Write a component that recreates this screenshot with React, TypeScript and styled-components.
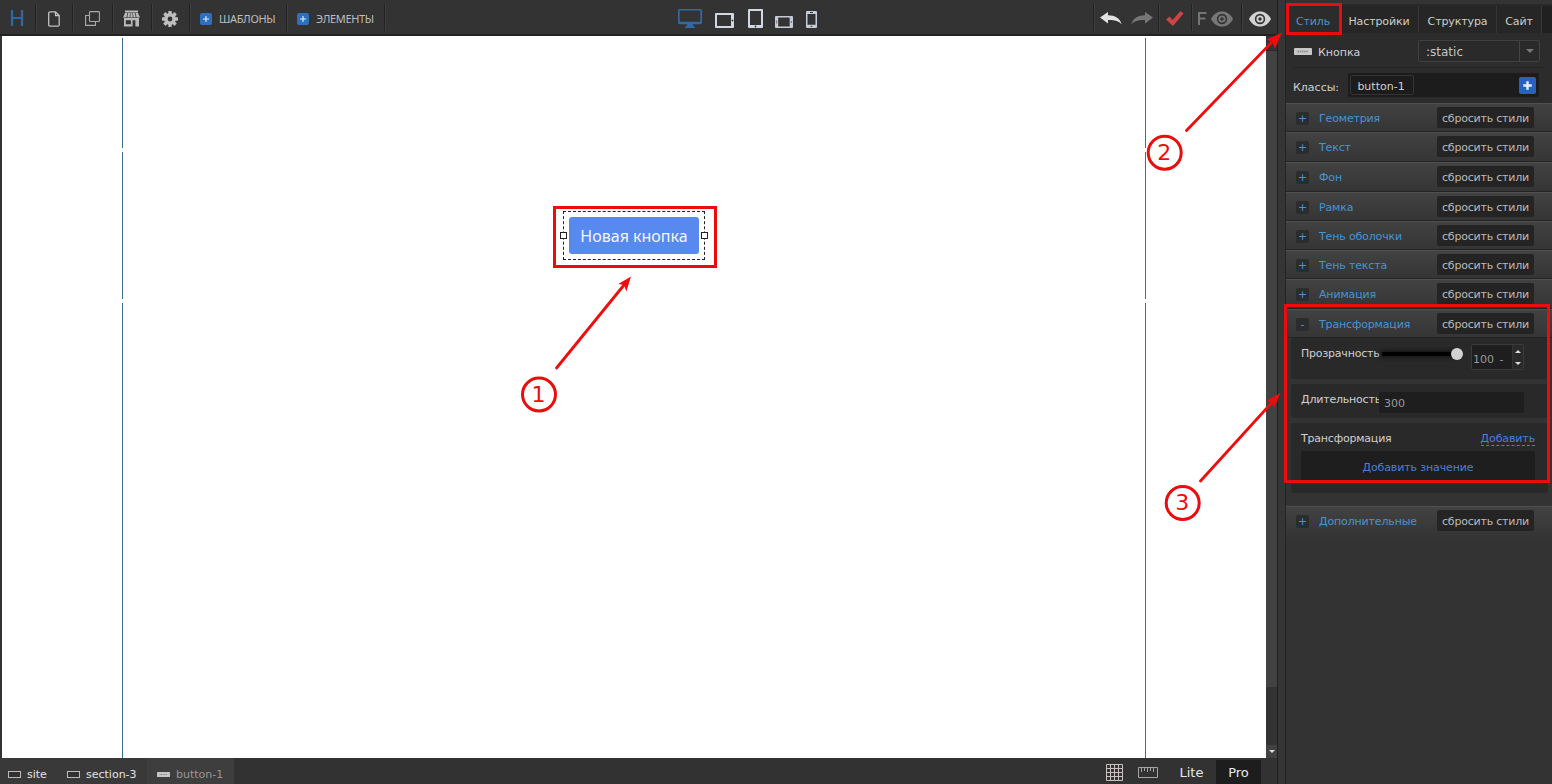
import React from "react";
import styled, { createGlobalStyle } from "styled-components";

const Global = createGlobalStyle`
  * { box-sizing: border-box; }
  body { margin: 0; background: #333; overflow: hidden; font-family: "DejaVu Sans", sans-serif; font-size: 11px; }
`;

const Screen = styled.div`
  position: relative;
  display: flex;
  width: 1552px;
  height: 784px;
  background: #333;
`;
const Main = styled.div`
  display: flex;
  flex-direction: column;
  width: 1277px;
`;
const Splitter = styled.div`
  width: 9px;
  background: #353535;
  border-left: 1px solid #202020;
  border-right: 1px solid #242424;
`;

/* Top toolbar */
const TopBar = styled.header`
  display: flex;
  justify-content: space-between;
  height: 36px;
  padding-top: 4px;
  background: #333;
  border-bottom: 2px solid #222;
`;
const Group = styled.div`
  display: flex;
  height: 27px;
`;
const Cell = styled.div<{ $w: number; $pad?: number; $plain?: boolean }>`
  display: flex;
  align-items: center;
  width: ${(p) => p.$w}px;
  padding: 2px 0 0 ${(p) => p.$pad ?? 0}px;
  border-right: ${(p) => (p.$plain ? "0" : "1px solid #232323")};
  box-shadow: ${(p) => (p.$plain ? "none" : "1px 0 0 #3e3e3e")};
  svg { flex: none; display: block; }
`;
const Logo = styled.span`
  margin-top: -4px;
  font: 400 22px/26px "Noto Sans", sans-serif;
  color: #2f6bae;
`;
const MenuText = styled.span`
  margin-left: 7px;
  font: 11px/16px "Noto Sans", sans-serif;
  letter-spacing: -0.35px;
  color: #bdbdbd;
  white-space: nowrap;
`;
const Devices = styled.div`
  display: flex;
  align-items: flex-end;
  height: 24px;
  margin-left: 17px;
  svg { display: block; flex: none; }
`;
const Device = styled.span<{ $gap: number }>`
  margin-right: ${(p) => p.$gap}px;
`;

/* Canvas */
const Stage = styled.div`
  display: flex;
  flex: 1;
  padding-left: 2px;
`;
const Page = styled.div`
  display: flex;
  flex-direction: column;
  gap: 4px;
  width: 1264px;
  padding: 2px 120px 0;
  background: #fff;
`;
const Section = styled.section<{ $h: number }>`
  height: ${(p) => p.$h}px;
  display: flex;
  justify-content: center;
  align-items: flex-start;
  border-left: 1px solid #39738a;
  border-right: 1px solid #39738a;
`;
const Selection = styled.div`
  display: flex;
  align-items: center;
  width: 142px;
  height: 49px;
  margin-top: 59px;
  margin-right: 1px;
  border: 1px dashed #222;
`;
const Handle = styled.i<{ $right?: boolean }>`
  width: 7px;
  height: 7px;
  flex: none;
  margin-left: ${(p) => (p.$right ? 2 : -4)}px;
  background: #fff;
  border: 1px solid #222;
`;
const PageButton = styled.button`
  width: 130px;
  height: 37px;
  margin-left: 2px;
  flex: none;
  padding: 1px 0 0 1px;
  border: 0;
  border-radius: 3px;
  background: #5789ee;
  color: #f2f6ff;
  font: 16px/36px "Noto Sans", sans-serif;
  white-space: nowrap;
`;
const Scroll = styled.div`
  display: flex;
  flex-direction: column;
  width: 11px;
  background: #333;
`;
const ScrollThumb = styled.div`
  height: 637px;
  margin-top: 14px;
  background: #424242;
  border-top: 1px solid #2a2a2a;
`;
const ScrollEnd = styled.div`
  display: flex;
  justify-content: center;
  align-items: center;
  height: 13px;
  margin-top: auto;
  background: #414141;
`;
const BottomBar = styled.footer`
  display: flex;
  height: 26px;
  background: #323232;
`;
const Crumb = styled.div<{ $w: number; $active?: boolean }>`
  display: flex;
  align-items: center;
  gap: 6px;
  width: ${(p) => p.$w}px;
  padding: 6px 0 0 ${(p) => (p.$active ? 10 : 8)}px;
  background: ${(p) => (p.$active ? "#3e3e3e" : "#393939")};
  color: ${(p) => (p.$active ? "#969696" : "#e4e4e4")};
  white-space: nowrap;
`;
const BottomTools = styled.div`
  display: flex;
  align-items: center;
  margin-left: auto;
  padding-right: 16px;
  padding-top: 2px;
  font-size: 13px;
  color: #e8e8e8;
  svg { display: block; }
`;
const Mode = styled.span<{ $on?: boolean }>`
  display: flex;
  justify-content: center;
  align-items: center;
  width: 45px;
  height: 24px;
  margin-left: ${(p) => (p.$on ? 2 : 11)}px;
  background: ${(p) => (p.$on ? "#1d1d1d" : "transparent")};
`;
const Gap = styled.span<{ $w: number }>`
  flex: none;
  width: ${(p) => p.$w}px;
`;

/* Inspector */
const Panel = styled.aside`
  display: flex;
  flex-direction: column;
  width: 266px;
  padding-top: 4px;
  background: #333;
  color: #d0d0d0;
`;
const Tabs = styled.nav`
  display: flex;
  height: 29px;
  padding-left: 1px;
  background: #202020;
  border-top: 2px solid #292929;
  letter-spacing: -0.12px;
`;
const Tab = styled.div<{ $w: number; $on?: boolean }>`
  display: flex;
  justify-content: center;
  align-items: center;
  width: ${(p) => p.$w}px;
  padding-top: 3px;
  background: ${(p) => (p.$on ? "#2c2c2c" : "#262626")};
  border-right: 1px solid #363636;
  color: ${(p) => (p.$on ? "#4596d5" : "#cfcfc4")};
`;
const Head = styled.div`
  height: 70px;
  padding: 7px 12px 0 7px;
  background: #2c2c2c;
`;
const HeadRow = styled.div<{ $h: number }>`
  display: flex;
  align-items: center;
  height: ${(p) => p.$h}px;
`;
const ElementName = styled.span`
  flex: 1;
  margin-left: 6px;
  padding-top: 2px;
`;
const Select = styled.div`
  display: flex;
  width: 122px;
  height: 22px;
  align-items: center;
  justify-content: space-between;
  padding-left: 7px;
  border: 1px solid #414141;
  border-radius: 2px;
  background: #2a2a2a;
  font-size: 12px;
  line-height: 22px;
  color: #c4c4c4;
`;
const SelectText = styled.span`
  padding-top: 1px;
`;
const SelectArrow = styled.span`
  display: flex;
  justify-content: center;
  align-items: center;
  width: 20px;
  height: 20px;
  border-left: 1px solid #444;
`;
const Rule = styled.div`
  height: 1px;
  margin: 5px -5px 5px 0;
  background: #242424;
`;
const ClassLabel = styled.span`
  padding-top: 4px;
`;
const ClassBox = styled.div`
  display: flex;
  align-items: center;
  justify-content: space-between;
  width: 191px;
  height: 24px;
  margin-left: auto;
  margin-right: 1px;
  padding: 0 3px 0 2px;
  background: #1c1c1c;
  border-radius: 2px;
`;
const Chip = styled.span`
  width: 64px;
  height: 20px;
  padding-right: 2px;
  border: 1px solid #343434;
  border-radius: 2px;
  text-align: center;
  line-height: 21px;
`;
const Row = styled.div<{ $h: number; $last?: boolean }>`
  display: flex;
  align-items: flex-start;
  height: ${(p) => p.$h}px;
  padding: 3px 18px 0 10px;
  border-top: 1px solid #505050;
  border-bottom: 1px solid ${(p) => (p.$last ? "#333" : "#242424")};
  background: linear-gradient(#424242, ${(p) => (p.$last ? "#333" : "#353535")});
`;
const Toggle = styled.span`
  width: 13px;
  height: 13px;
  margin-top: 5px;
  border-radius: 2px;
  background: #2a2c2e;
  color: #4596d5;
  font-size: 11px;
  line-height: 14px;
  text-align: center;
`;
const RowTitle = styled.span`
  flex: 1;
  margin-left: 10px;
  line-height: 23px;
  letter-spacing: -0.15px;
  color: #4495d5;
`;
const Reset = styled.button`
  width: 97px;
  height: 21px;
  padding: 2px 0 0;
  border: 0;
  border-radius: 2px;
  background: #242424;
  color: #bababa;
  font: 11px/19px "DejaVu Sans", sans-serif;
  letter-spacing: -0.21px;
  white-space: nowrap;
`;
const Body = styled.div`
  display: flex;
  flex-direction: column;
  gap: 5px;
  height: 168px;
  padding-left: 5px;
`;
const Card = styled.div<{ $h: number }>`
  width: 257px;
  height: ${(p) => p.$h}px;
  padding-left: 10px;
  border-radius: 3px;
  background: #292929;
`;
const Line = styled.div`
  display: flex;
  align-items: flex-start;
`;
const FieldLabel = styled.span`
  width: 78px;
  padding-top: 9px;
  line-height: 14px;
  letter-spacing: -0.2px;
  white-space: nowrap;
`;
const Slider = styled.div`
  display: flex;
  align-items: center;
  width: 84px;
  height: 12px;
  margin-top: 10px;
`;
const Track = styled.div`
  width: 71px;
  height: 4px;
  margin-left: 3px;
  background: #000;
  box-shadow: 0 0 4px 1px #111;
`;
const Knob = styled.div`
  width: 12px;
  height: 12px;
  margin-left: -2px;
  border-radius: 50%;
  background: #d2d2d2;
`;
const NumberBox = styled.div`
  display: flex;
  width: 53px;
  height: 26px;
  margin-left: 8px;
  margin-top: 6px;
  border: 1px solid #3a3a3a;
  border-radius: 2px;
  background: #1e1e1e;
  color: #9a9a9a;
`;
const NumberText = styled.span`
  flex: 1;
  padding: 8px 0 0 1px;
  line-height: 14px;
  word-spacing: 2px;
  white-space: pre;
`;
const Steps = styled.span`
  display: flex;
  flex-direction: column;
  justify-content: space-around;
  align-items: center;
  width: 11px;
  background: #2a2a2a;
  border-left: 1px solid #333;
`;
const Input = styled.div`
  width: 145px;
  height: 21px;
  margin-top: 8px;
  padding-left: 5px;
  border-radius: 2px;
  background: #1e1e1e;
  color: #999;
  line-height: 23px;
`;
const LinkText = styled.a`
  margin-left: auto;
  margin-right: 13px;
  margin-top: 9px;
  line-height: 13px;
  letter-spacing: -0.12px;
  color: #4d7fd8;
  border-bottom: 1px dashed #4d7fd8;
`;
const AddValue = styled.div`
  width: 234px;
  height: 31px;
  margin-top: 5px;
  background: #1e1e1e;
  border-radius: 2px;
  color: #4d7fd8;
  line-height: 33px;
  letter-spacing: -0.12px;
  text-align: center;
`;

/* Tutorial marks lie over the whole editor */
const Marks = styled.svg`
  position: absolute;
  inset: 0;
  pointer-events: none;
`;

const PlusIcon = ({ s, bg, r = 2 }: { s: number; bg: string; r?: number }) => (
  <svg width={s} height={s} viewBox="0 0 12 12">
    <rect width="12" height="12" rx={r} fill={bg} />
    <path d="M6 3v6M3 6h6" stroke="#e4edf8" strokeWidth={s > 14 ? 1.7 : 1.1} />
  </svg>
);
const Tri = ({ up, c = "#ddd", s = 6 }: { up?: boolean; c?: string; s?: number }) => (
  <svg width={s} height={s / 2} viewBox="0 0 6 3"><path d={up ? "M0 3 3 0l3 3z" : "M0 0h6L3 3z"} fill={c} /></svg>
);
const Eye = ({ c }: { c: string }) => (
  <svg width="22" height="16" viewBox="0 0 22 16">
    <path d="M0 8C2.5 3 6.5 .5 11 .5S19.500 3 22 8c-2.500 5-6.500 7.500-11 7.500S2.500 13 0 8z" fill={c} />
    <circle cx="11" cy="8" r="5.200" fill="#333" />
    <circle cx="11" cy="8" r="3.600" fill={c} />
    <circle cx="11" cy="8" r="1.700" fill="#333" />
  </svg>
);
const Arrow = ({ c, flip }: { c: string; flip?: boolean }) => (
  <svg width="22" height="13" viewBox="0 0 22 13">
    <path transform={flip ? "translate(22) scale(-1 1)" : undefined} d="M0 5.500 8 0v3.200c7 .1 12 2.800 13.700 9.300C18.500 8.700 14 7.800 8 8v3.400z" fill={c} />
  </svg>
);
const ButtonIcon = ({ w, h }: { w: number; h: number }) => (
  <svg width={w} height={h} viewBox="0 0 18 8" preserveAspectRatio="none">
    <rect width="18" height="8" rx="1" fill="#c6c6c6" />
    <path d="M3.500 4h11" stroke="#888" strokeWidth="1.800" strokeDasharray="1.500 .7" />
  </svg>
);
const BoxIcon = () => (
  <svg width="13" height="7" viewBox="0 0 13 7"><rect x=".5" y=".5" width="12" height="6" fill="#303030" stroke="#bbb" /></svg>
);

const sections: [string, number][] = [
  ["Геометрия", 29],
  ["Текст", 30],
  ["Фон", 30],
  ["Рамка", 29],
  ["Тень оболочки", 29],
  ["Тень текста", 29],
  ["Анимация", 30],
];

const SectionRow = ({ title, h, open, last }: { title: string; h: number; open?: boolean; last?: boolean }) => (
  <Row $h={h} $last={last}>
    <Toggle>{open ? "-" : "+"}</Toggle>
    <RowTitle>{title}</RowTitle>
    <Reset>сбросить стили</Reset>
  </Row>
);

const Toolbar = () => (
  <TopBar>
    <Group>
      <Cell $w={36} $pad={9}><Logo>H</Logo></Cell>
      <Cell $w={37} $pad={12}>
        <svg width="12" height="16" viewBox="0 0 12 16" fill="none" stroke="#c2c2c2" strokeWidth="1.300">
          <path d="M2.200.8h5.300L11.200 4.500v9.200a1.500 1.500 0 0 1-1.500 1.500H2.200a1.500 1.500 0 0 1-1.500-1.500V2.300A1.500 1.500 0 0 1 2.200.8zM7.500.8v3.700h3.700" />
        </svg>
      </Cell>
      <Cell $w={40} $pad={12}>
        <svg width="15" height="15" viewBox="0 0 15 15" fill="none" stroke="#a9a9a9" strokeWidth="1.100">
          <rect x="4.500" y=".6" width="9.900" height="9.900" rx=".8" /><path d="M4.500 4.500H.6v9.900h9.900v-3.900" />
        </svg>
      </Cell>
      <Cell $w={39} $pad={10}>
        <svg width="17" height="17" viewBox="0 0 17 17" fill="#b9b9b9">
          <path d="M2 .5h13v2H2zM2 3h2.300L3.500 7.500H0zM5 3h2l-.4 4.500h-2.300zM7.600 3h1.800l.3 4.500H7.300zM10 3h2l.7 4.500h-2.300zM12.700 3H15l2 4.500h-3.500z" />
          <path d="M1 8h15v8.500h-3.600v-6.200H9.600v6.200H1zM2.800 10.300v3.900h5.100v-3.900z" fillRule="evenodd" />
        </svg>
      </Cell>
      <Cell $w={38} $pad={10}>
        <svg width="16" height="16" viewBox="-8 -8 16 16" fill="#bdbdbd">
          {[0, 45, 90, 135].map((a) => <rect key={a} x="-1.700" y="-8" width="3.400" height="16" rx=".6" transform={`rotate(${a})`} />)}
          <circle r="5.900" /><circle r="2.400" fill="#333" />
        </svg>
      </Cell>
      <Cell $w={97} $pad={10}><PlusIcon s={12} bg="#2d70bd" /><MenuText>ШАБЛОНЫ</MenuText></Cell>
      <Cell $w={98} $pad={10}><PlusIcon s={12} bg="#2d70bd" /><MenuText>ЭЛЕМЕНТЫ</MenuText></Cell>
    </Group>
    <Devices>
      <Device $gap={13}>
        <svg width="24" height="19" viewBox="0 0 24 20" preserveAspectRatio="none" fill="#3069a8"><path fillRule="evenodd" d="M1.500 0h21Q24 0 24 1.500v13q0 1.500-1.500 1.500H15v1.500l2 1.500v1H7v-1l2-1.500V16H1.500Q0 16 0 14.500v-13Q0 0 1.500 0zM1.700 1.700v11.800h20.600V1.700z" /></svg>
      </Device>
      <Device $gap={14}>
        <svg width="19" height="15" viewBox="0 0 19 15" fill="#d0d8e4"><path fillRule="evenodd" d="M1 0h17q1 0 1 1v13q0 1-1 1H1q-1 0-1-1V1q0-1 1-1zM2 2v11h14V2z" /><circle cx="17.500" cy="7.500" r=".9" fill="#333" /></svg>
      </Device>
      <Device $gap={12}>
        <svg width="15" height="19" viewBox="0 0 15 19" fill="#d0d8e4"><path fillRule="evenodd" d="M1 0h13q1 0 1 1v17q0 1-1 1H1q-1 0-1-1V1q0-1 1-1zM2 2v14h11V2z" /><circle cx="7.500" cy="17.500" r=".9" fill="#333" /></svg>
      </Device>
      <Device $gap={13}>
        <svg width="18" height="12" viewBox="0 0 18 12" fill="#c5ccd8"><path fillRule="evenodd" d="M1 0h16q1 0 1 1v10q0 1-1 1H1q-1 0-1-1V1q0-1 1-1zM3.200 1.500v9h11.500v-9z" /><path d="M1.700 4.500v3M16.300 5v2" stroke="#555" strokeWidth=".8" /></svg>
      </Device>
      <Device $gap={0}>
        <svg width="11" height="17" viewBox="0 0 11 17" fill="#c5ccd8"><path fillRule="evenodd" d="M1.200 0h8.600Q11 0 11 1.200v14.600q0 1.200-1.200 1.200H1.200Q0 17 0 15.800V1.200Q0 0 1.200 0zM1.500 3v10.800h8V3z" /><path d="M4 1.500h3M4.700 15.400h1.600" stroke="#333" /></svg>
      </Device>
    </Devices>
    <Group>
      <Cell $w={1} />
      <Cell $w={65} $pad={6}><Arrow c="#e2e2e2" /><Gap $w={9} /><Arrow c="#777" flip /></Cell>
      <Cell $w={33} $pad={7}>
        <svg width="18" height="15" viewBox="0 0 18 15"><path d="M0 8.500 3.500 5.500 6.500 9 14.500 0 17.500 2.500 7 15z" fill="#cc4444" /></svg>
      </Cell>
      <Cell $w={50} $pad={6}>
        <svg width="9" height="13" viewBox="0 0 9 13" fill="none" stroke="#747474" strokeWidth="2"><path d="M1 13V1h7.500M1 6.500h6.500" /></svg>
        <Gap $w={4} /><Eye c="#777" />
      </Cell>
      <Cell $w={35} $pad={7} $plain><Eye c="#d3d3d3" /></Cell>
    </Group>
  </TopBar>
);

const Inspector = () => (
  <Panel>
    <Tabs>
      <Tab $w={53} $on>Стиль</Tab><Tab $w={79}>Настройки</Tab><Tab $w={78}>Структура</Tab><Tab $w={45}>Сайт</Tab>
    </Tabs>
    <Head>
      <HeadRow $h={22}>
        <Gap $w={1} /><ButtonIcon w={18} h={7} /><ElementName>Кнопка</ElementName>
        <Select><SelectText>:static</SelectText><SelectArrow><Tri s={8} c="#777" /></SelectArrow></Select>
      </HeadRow>
      <Rule />
      <HeadRow $h={24}>
        <ClassLabel>Классы:</ClassLabel>
        <ClassBox><Chip>button-1</Chip><PlusIcon s={17} bg="#2a60c4" r={1.4} /></ClassBox>
      </HeadRow>
    </Head>
    {sections.map(([t, h]) => <SectionRow key={t} title={t} h={h} />)}
    <SectionRow title="Трансформация" h={29} open />
    <Body>
      <Card $h={41}>
        <Line>
          <FieldLabel>Прозрачность</FieldLabel>
          <Slider><Track /><Knob /></Slider>
          <NumberBox><NumberText>100 -</NumberText><Steps><Tri up /><Tri /></Steps></NumberBox>
        </Line>
      </Card>
      <Card $h={34}>
        <Line><FieldLabel>Длительность</FieldLabel><Input>300</Input></Line>
      </Card>
      <Card $h={70}>
        <Line><FieldLabel>Трансформация</FieldLabel><LinkText>Добавить</LinkText></Line>
        <AddValue>Добавить значение</AddValue>
      </Card>
    </Body>
    <SectionRow title="Дополнительные" h={36} last />
  </Panel>
);

const callouts = [
  { n: "1", cx: 539, cy: 394.5, line: "M556.500 368 624 285", head: "M631 276.500 618.300 284 624 285 626.300 291.500z" },
  { n: "2", cx: 1164.7, cy: 152.7, line: "M1186.500 130.500 1271 43", head: "M1282 32.500 1266.500 39.500 1272 42 1275 48.500z" },
  { n: "3", cx: 1182.7, cy: 503, line: "M1200.500 481 1271.500 403", head: "M1280.500 393 1266.500 400.500 1272 402 1274 408z" },
];

export default function App() {
  return (
    <Screen>
      <Global />
      <Main>
        <Toolbar />
        <Stage>
          <Page>
            <Section $h={110} />
            <Section $h={147}>
              <Selection><Handle /><PageButton>Новая кнопка</PageButton><Handle $right /></Selection>
            </Section>
            <Section $h={455} />
          </Page>
          <Scroll><ScrollThumb /><ScrollEnd><Tri /></ScrollEnd></Scroll>
        </Stage>
        <BottomBar>
          <Crumb $w={59}><BoxIcon />site</Crumb>
          <Crumb $w={88}><BoxIcon />section-3</Crumb>
          <Crumb $w={87} $active><ButtonIcon w={13} h={5} />button-1</Crumb>
          <BottomTools>
            <svg width="17" height="17" viewBox="0 0 17 17"><path d="M.5.5h16v16H.5zM4.500 0v17M8.500 0v17M12.500 0v17M0 4.500h17M0 8.500h17M0 12.500h17" fill="none" stroke="#c9c2c0" /></svg>
            <Gap $w={15} />
            <svg width="20" height="11" viewBox="0 0 20 11"><path d="M.5.5h19v10H.5zM3.500 1v4M6.500 1v3M9.500 1v4M12.500 1v3M15.500 1v4" fill="none" stroke="#a5a5a5" /></svg>
            <Mode>Lite</Mode><Mode $on>Pro</Mode>
          </BottomTools>
        </BottomBar>
      </Main>
      <Splitter />
      <Inspector />
      <Marks width="1552" height="784" fill="none" stroke="#ec0c0c" strokeWidth="3">
        <rect x="554.500" y="207.500" width="161" height="59" />
        <rect x="1287.500" y="4.500" width="53" height="29" />
        <rect x="1285.500" y="305.500" width="263" height="176" />
        {callouts.map((c) => (
          <g key={c.n}>
            <circle cx={c.cx} cy={c.cy} r="16.500" />
            <path d={c.line} stroke="#f40a0a" strokeWidth="2.800" strokeLinecap="round" />
            <path d={c.head} fill="#f40a0a" stroke="none" />
            <text x={c.cx - 0.5} y={c.cy + 7.3} textAnchor="middle" fontSize="22" fontFamily="DejaVu Sans" fill="#ec0c0c" stroke="none">{c.n}</text>
          </g>
        ))}
      </Marks>
    </Screen>
  );
}
